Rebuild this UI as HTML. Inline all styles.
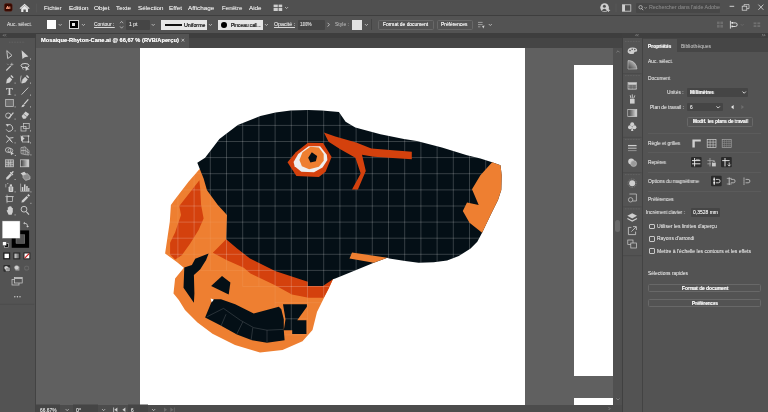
<!DOCTYPE html>
<html lang="fr">
<head>
<meta charset="utf-8">
<title>Mosaique-Rhyton-Cane.ai @ 66,67 % (RVB/Aperçu)</title>
<style>
*{box-sizing:border-box;margin:0;padding:0}
html,body{width:768px;height:412px;overflow:hidden;background:#535353}
body{position:relative;font-family:"Liberation Sans",sans-serif;font-size:5px;color:#d6d6d6;line-height:1}
.a{position:absolute}
.t{position:absolute;white-space:nowrap;line-height:7px;height:7px;transform-origin:0 50%;will-change:transform;text-shadow:0 0 0.5px currentColor}
svg{position:absolute;overflow:visible;will-change:transform}
#menubar{left:0;top:0;width:768px;height:16px;background:#505050}
#ctrlbar{left:0;top:15px;width:768px;height:18px;background:#535353;border-top:1px solid #3e3e3e}
#tabbar{left:34px;top:32.5px;width:589px;height:15px;background:linear-gradient(#3e3e3e 0,#3e3e3e 5px,#454545 5.5px)}
#tab{left:36px;top:33.5px;width:153px;height:14px;background:#535353}
#tools{left:0;top:33px;width:34.5px;height:379px;background:#535353}
#toolshead{left:0;top:32.5px;width:36px;height:5.5px;background:#3f3f3f}
#toolsep{left:34.7px;top:33px;width:1.3px;height:379px;background:#434343}
#canvas{left:36px;top:47.5px;width:577px;height:357px;background:#606060;overflow:hidden}
#ab1{left:104px;top:0;width:385px;height:357px;background:#fff}
#ab2{left:538px;top:17.5px;width:39px;height:311px;background:#fff}
#ab3{left:538px;top:350.5px;width:39px;height:30px;background:#fff}
#vscroll{left:613px;top:47.5px;width:10px;height:357px;background:#505050}
#vthumb{left:614.8px;top:220px;width:5.6px;height:12px;background:#696969;border-radius:2.5px}
#status{left:36px;top:404.5px;width:587px;height:8px;background:#4c4c4c}
#rhead{left:622px;top:32.5px;width:146px;height:6px;background:#3f3f3f}
#icons{left:622.3px;top:38px;width:19.7px;height:374px;background:#535353;border-left:1.2px solid #404040}
#isep{left:641.7px;top:38px;width:1.3px;height:374px;background:#434343}
#panel{left:643px;top:38px;width:125px;height:374px;background:#535353}
#ptabs{left:643px;top:38px;width:125px;height:14px;background:#464646}
#ptab{left:643px;top:38.5px;width:33.5px;height:14px;background:#535353}
.fld{position:absolute;background:#454545;border-radius:1px}
.btn{position:absolute;border:0.6px solid #686868;border-radius:1.5px;background:#535353}
.sw{position:absolute}
.hl{position:absolute;height:0.6px;background:#5b5b5b}
.cb{position:absolute;width:5.6px;height:5.6px;border:0.7px solid #c8c8c8;border-radius:1px}
.dk{position:absolute;background:#2c2c2c;border-radius:1px}
</style>
</head>
<body>
<div id="menubar" class="a"></div>
<div id="ctrlbar" class="a"></div>
<div id="tabbar" class="a"></div>
<div id="tab" class="a"></div>
<div id="tools" class="a"></div>
<div id="toolsep" class="a"></div>
<div id="toolshead" class="a"></div>
<div id="canvas" class="a">
  <div id="ab1" class="a"></div>
  <div id="ab2" class="a"></div>
  <div id="ab3" class="a"></div>
</div>
<div id="vscroll" class="a"></div>
<div id="vthumb" class="a"></div>
<div id="status" class="a"></div>
<div id="rhead" class="a"></div>
<div id="icons" class="a"></div>
<div id="isep" class="a"></div>
<div id="panel" class="a"></div>
<div id="ptabs" class="a"></div>
<div id="ptab" class="a"></div>
<!-- menu bar widgets -->
<div class="fld" style="left:636px;top:3px;width:84px;height:9.5px;background:#474747"></div>
<!-- control bar widgets -->
<div class="sw" style="left:46.8px;top:19.8px;width:9.6px;height:9.3px;background:#fff"></div>
<div class="sw" style="left:68.7px;top:19.6px;width:10.2px;height:9.7px;background:#000;border:0.7px solid #d8d8d8"></div>
<div class="sw" style="left:72.3px;top:23px;width:3px;height:3px;background:#e8e8e8"></div>
<div class="fld" style="left:126px;top:20px;width:24px;height:9.5px"></div>
<div class="sw" style="left:161px;top:19.7px;width:45.5px;height:10px;background:#e6e6e6"></div>
<div class="sw" style="left:165px;top:24px;width:17px;height:1.7px;background:#111"></div>
<div class="sw" style="left:218px;top:19.7px;width:44.5px;height:10px;background:#e6e6e6"></div>
<div class="sw" style="left:221.3px;top:21.8px;width:5.8px;height:5.8px;background:#000;border-radius:50%"></div>
<div class="fld" style="left:298px;top:20px;width:27px;height:9.5px"></div>
<div class="sw" style="left:352.3px;top:19.5px;width:10px;height:10px;background:#e2e2e2"></div>
<div class="btn" style="left:377.6px;top:19.8px;width:56px;height:9.8px"></div>
<div class="btn" style="left:437px;top:19.8px;width:35.6px;height:9.8px"></div>
<div class="a" style="left:371px;top:19px;width:0.7px;height:11px;background:#444"></div>
<!-- panel widgets -->
<div class="fld" style="left:687.3px;top:88px;width:61px;height:8.8px"></div>
<div class="fld" style="left:687.3px;top:102.7px;width:35.5px;height:8.8px"></div>
<div class="btn" style="left:686.5px;top:117.3px;width:66.7px;height:9.3px"></div>
<div class="hl" style="left:648px;top:133px;width:113px"></div>
<div class="hl" style="left:648px;top:152.3px;width:113px"></div>
<div class="hl" style="left:648px;top:171.8px;width:113px"></div>
<div class="hl" style="left:648px;top:190.7px;width:113px"></div>
<div class="fld" style="left:691px;top:207.8px;width:29.3px;height:8.8px"></div>
<div class="cb" style="left:649px;top:223.7px"></div>
<div class="cb" style="left:649px;top:236px"></div>
<div class="cb" style="left:649px;top:248.2px"></div>
<div class="btn" style="left:648.3px;top:283.5px;width:112.5px;height:8.8px"></div>
<div class="btn" style="left:648.3px;top:298.7px;width:112.5px;height:8.8px"></div>
<svg id="dog" width="768" height="412" viewBox="0 0 768 412" style="left:0;top:0">
<defs><clipPath id="sil"><polygon points="199.4,169.3 188.5,181.8 174.3,200.3 170.9,205.0 169.8,221.8 165.1,253.6 176.8,262.0 183.8,267.8 182.7,269.2 175.1,278.5 173.5,293.5 178.8,300.0 185.0,310.0 197.5,322.5 212.5,333.8 235.0,345.0 260.0,352.5 282.5,350.0 302.5,341.2 312.5,330.0 317.0,312.0 323.7,298.5 328.7,288.5 332.9,279.3 300.0,250.0 230.0,200.0 210.0,170.0" fill="#000"/><polygon points="197.3,162.8 205.1,157.8 219.4,138.9 237.8,125.1 260.4,115.9 275.5,112.6 290.6,110.4 308.0,110.0 321.8,110.4 338.9,112.1 345.6,121.8 355.3,127.6 380.4,134.3 403.9,138.9 416.8,140.9 441.9,147.6 467.0,155.2 480.4,158.5 492.1,162.2 500.5,165.2 501.7,175.3 501.3,190.0 498.0,200.1 491.3,213.5 482.1,232.8 477.3,241.8 470.6,248.5 458.8,256.0 447.1,260.5 433.7,262.2 418.6,262.7 405.2,261.0 389.3,258.5 387.2,257.7 373.8,262.7 353.7,271.0 335.3,278.6 332.9,279.3 322.9,286.0 307.8,286.0 307.8,281.8 275.1,270.9 250.0,258.4 237.1,248.6 226.2,239.3 227.0,215.0 217.8,205.0 207.0,190.2 203.6,178.5" fill="#000"/></clipPath><clipPath id="strong"><polygon points="197.3,162.8 205.1,157.8 219.4,138.9 237.8,125.1 260.4,115.9 275.5,112.6 290.6,110.4 308.0,110.0 321.8,110.4 338.9,112.1 345.6,121.8 355.3,127.6 380.4,134.3 403.9,138.9 416.8,140.9 441.9,147.6 467.0,155.2 480.4,158.5 492.1,162.2 500.5,165.2 501.7,175.3 501.3,190.0 498.0,200.1 491.3,213.5 482.1,232.8 477.3,241.8 470.6,248.5 458.8,256.0 447.1,260.5 433.7,262.2 418.6,262.7 405.2,261.0 389.3,258.5 387.2,257.7 373.8,262.7 353.7,271.0 335.3,278.6 332.9,279.3 322.9,286.0 307.8,286.0 307.8,281.8 275.1,270.9 250.0,258.4 237.1,248.6 226.2,239.3 227.0,215.0 217.8,205.0 207.0,190.2 203.6,178.5" fill="#000"/><polygon points="226.2,239.3 230.0,235.0 332.9,275.0 332.9,279.3 328.7,288.5 323.7,297.7 308.6,297.7 291.9,294.4 275.1,285.2 250.5,273.4 243.8,267.8 227.0,260.3 212.8,252.7" fill="#000"/><polygon points="199.4,180.2 179.3,206.1 181.0,215.0 175.1,232.6 170.1,242.7 170.1,254.4 175.1,259.4 181.8,255.3 190.2,243.5 198.6,230.1 203.6,218.4 201.1,205.0 200.3,190.0" fill="#000"/><polygon points="283.0,304.2 306.9,304.2 306.9,306.8 297.2,320.2 306.4,320.2 306.4,333.9 292.2,333.9 292.2,330.2 283.8,330.2 285.5,319.3" fill="#000"/></clipPath></defs>
<polygon points="199.4,169.3 188.5,181.8 174.3,200.3 170.9,205.0 169.8,221.8 165.1,253.6 176.8,262.0 183.8,267.8 182.7,269.2 175.1,278.5 173.5,293.5 178.8,300.0 185.0,310.0 197.5,322.5 212.5,333.8 235.0,345.0 260.0,352.5 282.5,350.0 302.5,341.2 312.5,330.0 317.0,312.0 323.7,298.5 328.7,288.5 332.9,279.3 300.0,250.0 230.0,200.0 210.0,170.0" fill="#ee7f31"/>
<path d="M226.5 109.3H356.1M210.3 125.4H420.9M194.1 141.5H485.7M194.1 157.6H501.9M177.9 173.7H501.9M161.7 189.9H501.9M161.7 206.0H501.9M161.7 222.1H501.9M161.7 238.2H485.7M161.7 254.3H485.7M161.7 270.4H469.5M242.7 286.5H356.1M275.1 302.7H339.9M275.1 318.8H307.5M275.1 334.9H307.5M161.7 189.9V270.4M177.9 173.7V270.4M194.1 141.5V270.4M210.3 125.4V270.4M226.5 109.3V270.4M242.7 109.3V286.5M258.9 109.3V286.5M275.1 109.3V334.9M291.3 109.3V334.9M307.5 109.3V334.9M323.7 109.3V302.7M339.9 109.3V302.7M356.1 109.3V286.5M372.3 125.4V270.4M388.5 125.4V270.4M404.7 125.4V270.4M420.9 125.4V270.4M437.1 141.5V270.4M453.3 141.5V270.4M469.5 141.5V270.4M485.7 141.5V254.3M501.9 157.6V222.1" stroke="#ffffff" stroke-opacity="0.07" stroke-width="1" fill="none" clip-path="url(#sil)"/>
<polygon points="226.2,239.3 230.0,235.0 332.9,275.0 332.9,279.3 328.7,288.5 323.7,297.7 308.6,297.7 291.9,294.4 275.1,285.2 250.5,273.4 243.8,267.8 227.0,260.3 212.8,252.7" fill="#d4410d"/>
<polygon points="199.4,180.2 179.3,206.1 181.0,215.0 175.1,232.6 170.1,242.7 170.1,254.4 175.1,259.4 181.8,255.3 190.2,243.5 198.6,230.1 203.6,218.4 201.1,205.0 200.3,190.0" fill="#d4410d"/>
<polygon points="197.3,162.8 205.1,157.8 219.4,138.9 237.8,125.1 260.4,115.9 275.5,112.6 290.6,110.4 308.0,110.0 321.8,110.4 338.9,112.1 345.6,121.8 355.3,127.6 380.4,134.3 403.9,138.9 416.8,140.9 441.9,147.6 467.0,155.2 480.4,158.5 492.1,162.2 500.5,165.2 501.7,175.3 501.3,190.0 498.0,200.1 491.3,213.5 482.1,232.8 477.3,241.8 470.6,248.5 458.8,256.0 447.1,260.5 433.7,262.2 418.6,262.7 405.2,261.0 389.3,258.5 387.2,257.7 373.8,262.7 353.7,271.0 335.3,278.6 332.9,279.3 322.9,286.0 307.8,286.0 307.8,281.8 275.1,270.9 250.0,258.4 237.1,248.6 226.2,239.3 227.0,215.0 217.8,205.0 207.0,190.2 203.6,178.5" fill="#040f16"/>
<polygon points="208.6,253.6 195.2,258.7 191.9,265.0 184.3,267.6 183.5,287.7 193.9,302.7 194.4,293.5 193.9,275.1 200.3,269.2 206.1,260.0" fill="#040f16"/>
<polygon points="222.0,275.9 230.4,282.6 228.7,294.4 211.1,286.0" fill="#040f16"/>
<polygon points="212.6,299.2 221.0,299.2 235.2,304.2 253.7,313.5 278.8,306.8 281.3,309.3 283.8,319.3 283.8,330.2 284.6,340.3 267.0,342.8 252.0,340.3 236.9,334.4 220.2,325.2 205.1,317.6" fill="#040f16"/>
<polygon points="283.0,304.2 306.9,304.2 306.9,306.8 297.2,320.2 306.4,320.2 306.4,333.9 292.2,333.9 292.2,330.2 283.8,330.2 285.5,319.3" fill="#040f16"/>
<path d="M226.5 109.3H356.1M210.3 125.4H420.9M194.1 141.5H485.7M194.1 157.6H501.9M177.9 173.7H501.9M161.7 189.9H501.9M161.7 206.0H501.9M161.7 222.1H501.9M161.7 238.2H485.7M161.7 254.3H485.7M161.7 270.4H469.5M242.7 286.5H356.1M275.1 302.7H339.9M275.1 318.8H307.5M275.1 334.9H307.5M161.7 189.9V270.4M177.9 173.7V270.4M194.1 141.5V270.4M210.3 125.4V270.4M226.5 109.3V270.4M242.7 109.3V286.5M258.9 109.3V286.5M275.1 109.3V334.9M291.3 109.3V334.9M307.5 109.3V334.9M323.7 109.3V302.7M339.9 109.3V302.7M356.1 109.3V286.5M372.3 125.4V270.4M388.5 125.4V270.4M404.7 125.4V270.4M420.9 125.4V270.4M437.1 141.5V270.4M453.3 141.5V270.4M469.5 141.5V270.4M485.7 141.5V254.3M501.9 157.6V222.1" stroke="#ffffff" stroke-opacity="0.2" stroke-width="1" fill="none" clip-path="url(#strong)"/>
<polygon points="492.1,162.2 500.5,165.2 501.7,175.3 501.3,190.0 498.0,200.1 491.3,213.5 482.1,232.8 469.5,222.7 462.8,211.0 467.0,202.6 478.7,205.1 472.0,189.2 480.4,175.3" fill="#ee7f31"/>
<polygon points="352.0,252.6 387.2,257.7 373.8,262.7 349.5,258.5" fill="#ee7f31"/>
<polygon points="210.6,298.6 213.9,299.6 211.6,302.6" fill="#fff"/>
<polygon points="287.5,162.2 295.8,152.2 308.0,142.7 323.1,143.1 331.6,157.1 325.6,171.7 318.9,177.1 296.4,175.9" fill="#d4410d"/>
<polygon points="293.6,162.0 298.2,154.0 308.6,146.2 320.1,146.2 326.8,154.7 327.4,160.1 322.5,167.4 314.0,172.3 301.3,171.7 294.6,166.2" fill="#efefef"/>
<polygon points="299.4,160.1 302.5,152.2 310.4,146.8 318.9,147.4 323.7,154.0 323.7,160.7 318.9,166.8 309.2,169.2 301.9,166.2" fill="#ee7f31"/>
<polygon points="308.2,157.7 311.8,152.2 317.1,155.9 315.8,161.3 310.4,162.6" fill="#040f16"/>
<polygon points="323.9,132.5 335.3,136.4 356.2,142.6 371.3,148.5 411.8,151.8 411.8,159.3 373.8,156.8 362.0,154.8 365.8,171.0 357.9,189.5 352.0,189.5 360.7,173.6 355.4,157.7 340.3,149.3 328.6,141.8" fill="#d4410d"/>
<g stroke="#8a8f92" stroke-width="0.35" fill="none" opacity="0.8"><path d="M206.8 316.8L223.5 308.4L240.3 320.2L253.7 327.7L267 330.2L283 329.4M226 314.3L221 326M242.8 321.8L236.9 333.9M252.8 327.7L251.1 340.3M267 330.2L267 342.3"/></g>
</svg>
<svg id="toolsvg" width="36" height="412" viewBox="0 0 36 412" style="left:0;top:0" fill="none" stroke="none">
<path d="M3.2 35.3l1-1M3.2 35.3l1 1M5 35.3l1-1M5 35.3l1 1" stroke="#bdbdbd" stroke-width="0.5"/>
<path d="M9 42.2h16" stroke="#6a6a6a" stroke-width="0.8" stroke-dasharray="0.8 0.8"/>
<path d="M6.8 50.6L7.7 58.6L12 55.4Z" stroke="#cfcfcf" stroke-width="0.9" stroke-linejoin="round"/>
<path d="M21.6 50.3L22.4 59L24.7 57.2L28.4 56.6Z" fill="#cfcfcf"/>
<rect x="30" y="58.5" width="1" height="1" fill="#bdbdbd"/>
<path d="M6.3 70.5L10.8 65.8" stroke="#cfcfcf" stroke-width="1.1"/><path d="M11.8 62.8v3.2M10.2 64.4h3.2M7.3 63.8l1 1" stroke="#cfcfcf" stroke-width="0.6"/>
<ellipse cx="25" cy="65.6" rx="4" ry="2.1" stroke="#cfcfcf" stroke-width="1"/><path d="M25.3 66L25.8 71L27.2 69.8L29.6 69.6Z" fill="#cfcfcf"/><path d="M22.6 67.3q-0.6 1.6 0.8 2.4" stroke="#cfcfcf" stroke-width="0.7"/>
<g transform="translate(6.2 75.2)"><path d="M0 8.2L0.6 4.2L3.4 1.6L6 4.2L3.6 7.2Z" fill="#cfcfcf"/><path d="M4.1 0.9L5.2 -0.2L7.4 2L6.5 3.1Z" fill="#cfcfcf"/></g>
<rect x="14.6" y="82.6" width="1" height="1" fill="#bdbdbd"/>
<g transform="translate(21.8 75.2)"><path d="M0 8.2L0.6 4.2L3.4 1.6L6 4.2L3.6 7.2Z" fill="#cfcfcf"/><path d="M4.1 0.9L5.2 -0.2L7.4 2L6.5 3.1Z" fill="#cfcfcf"/></g>
<path d="M21.2 75.6q-1.6 3.4 0.2 7.6" stroke="#cfcfcf" stroke-width="0.7"/>
<rect x="30" y="82.6" width="1" height="1" fill="#bdbdbd"/>
<text x="6" y="95" font-family="Liberation Serif,serif" font-weight="bold" font-size="10.4" fill="#cfcfcf">T</text>
<rect x="14.6" y="94.6" width="1" height="1" fill="#bdbdbd"/>
<path d="M21.6 94.6L28.2 87.6" stroke="#cfcfcf" stroke-width="0.9"/>
<rect x="30" y="94.6" width="1" height="1" fill="#bdbdbd"/>
<rect x="5.7" y="99.6" width="7.6" height="7" fill="#6c6c6c" stroke="#cfcfcf" stroke-width="0.7"/>
<rect x="14.6" y="106.4" width="1" height="1" fill="#bdbdbd"/>
<path d="M24.2 104.2L28.3 99.4" stroke="#cfcfcf" stroke-width="1.2"/><path d="M21.4 107.2q0.4-2.6 2.4-3l1 1q-0.6 2-3.4 2Z" fill="#cfcfcf"/>
<rect x="30" y="106.4" width="1" height="1" fill="#bdbdbd"/>
<circle cx="8.2" cy="115.6" r="2.6" stroke="#cfcfcf" stroke-width="0.8"/><path d="M8.4 118.6L13.4 112.6" stroke="#cfcfcf" stroke-width="1.2"/>
<rect x="14.6" y="118.6" width="1" height="1" fill="#bdbdbd"/>
<path d="M21.6 116L25.6 111.6L29.2 114L25.4 118.8H23Z" fill="#cfcfcf"/><path d="M23.4 114L26.8 116.6" stroke="#535353" stroke-width="0.6"/>
<rect x="30" y="118.6" width="1" height="1" fill="#bdbdbd"/>
<path d="M7.4 125.2A3.4 3.4 0 1 1 6.2 129.4" stroke="#cfcfcf" stroke-width="0.9"/><path d="M5.6 124.2L8.8 124L7.6 126.8Z" fill="#cfcfcf"/>
<rect x="14.6" y="130.4" width="1" height="1" fill="#bdbdbd"/>
<rect x="21" y="126.4" width="5" height="4.6" stroke="#cfcfcf" stroke-width="0.7"/><rect x="23.6" y="123.4" width="5.6" height="5" stroke="#cfcfcf" stroke-width="0.7"/>
<rect x="30" y="130.4" width="1" height="1" fill="#bdbdbd"/>
<path d="M6 135.6L9 138.2L13.4 137.6M6.4 142.6L9.2 139.4L12.6 142.4" stroke="#cfcfcf" stroke-width="1"/><path d="M8 137.4L11.2 140.6" stroke="#cfcfcf" stroke-width="0.9"/>
<rect x="14.6" y="142.4" width="1" height="1" fill="#bdbdbd"/>
<rect x="22.4" y="136" width="6.2" height="6" stroke="#cfcfcf" stroke-width="0.7"/><path d="M20.6 135.2L24.6 138.6L21.2 141.4Z" fill="#cfcfcf"/><rect x="27.8" y="135.3" width="1.5" height="1.5" fill="#cfcfcf"/><rect x="27.8" y="141.2" width="1.5" height="1.5" fill="#cfcfcf"/>
<rect x="30" y="142.4" width="1" height="1" fill="#bdbdbd"/>
<ellipse cx="8.2" cy="150" rx="2.8" ry="2.4" stroke="#cfcfcf" stroke-width="0.8"/><ellipse cx="10.4" cy="150.6" rx="2.4" ry="2.2" stroke="#cfcfcf" stroke-width="0.7"/><path d="M10.6 151L11 155.2L12.2 154.2L14 154Z" fill="#cfcfcf"/>
<rect x="14.8" y="155" width="1" height="1" fill="#bdbdbd"/>
<path d="M21 147.6L25.2 146.8V154.6L21 153.6ZM25.2 146.8L29 150.8V155L25.2 154.6M21 150.6L25.2 150.4L29 153M23.1 147.2V154.2M27.2 149V154.8" stroke="#cfcfcf" stroke-width="0.6"/>
<rect x="30.4" y="154.4" width="1" height="1" fill="#bdbdbd"/>
<rect x="5.6" y="159.8" width="7.8" height="7" fill="#7a7a7a" stroke="#cfcfcf" stroke-width="0.7"/><path d="M5.6 162.1q3.9 1.2 7.8 0M5.6 164.6q3.9-1.2 7.8 0M8.2 159.8q1 3.5 0 7M10.8 159.8q-1 3.5 0 7" stroke="#cfcfcf" stroke-width="0.6"/>
<defs><linearGradient id="gr1" x1="0" x2="1" y1="0" y2="0"><stop offset="0" stop-color="#3a3a3a"/><stop offset="1" stop-color="#e0e0e0"/></linearGradient></defs>
<rect x="20.4" y="159.8" width="8.4" height="7" fill="url(#gr1)" stroke="#cfcfcf" stroke-width="0.7"/>
<path d="M6 179.6L6.4 177.6L10.2 173.6L11.8 175.2L8 179.2Z" fill="#cfcfcf"/><path d="M10.6 172.6L12.6 174.6M11.2 173.8L13 171.8" stroke="#cfcfcf" stroke-width="1.3" stroke-linecap="round"/>
<rect x="14.6" y="179" width="1" height="1" fill="#bdbdbd"/>
<path d="M20.6 173.2L24.4 171.8L26.8 174.4L23 175.8Z" fill="#cfcfcf"/><path d="M23 175.2L27.4 173.6L30 176.6V179L25.6 180.4L23 177.6Z" fill="#8c8c8c" stroke="#cfcfcf" stroke-width="0.6"/>
<rect x="8.6" y="186.4" width="4.6" height="5.6" rx="0.8" fill="#cfcfcf"/><rect x="9.8" y="184.4" width="2.2" height="2" fill="#cfcfcf"/><path d="M5.8 184v3.4M7 183.6h1.4" stroke="#cfcfcf" stroke-width="0.6"/><path d="M10 188h1.8M10 190h1.8" stroke="#535353" stroke-width="0.7"/>
<rect x="14.6" y="191.4" width="1" height="1" fill="#bdbdbd"/>
<path d="M20.6 183.6V191.4H29.6" stroke="#cfcfcf" stroke-width="0.6"/><rect x="21.8" y="187" width="1.5" height="4" fill="#cfcfcf"/><rect x="24" y="184.4" width="1.5" height="6.6" fill="#cfcfcf"/><rect x="26.2" y="186" width="1.5" height="5" fill="#cfcfcf"/><rect x="28.2" y="188" width="1.2" height="3" fill="#cfcfcf"/>
<rect x="30.4" y="191.4" width="1" height="1" fill="#bdbdbd"/>
<rect x="7" y="196.6" width="5.4" height="5" stroke="#cfcfcf" stroke-width="0.7"/><path d="M7 194.6v8.6M5.2 196.6h8.8" stroke="#cfcfcf" stroke-width="0.6"/>
<path d="M21.4 202.6L22 200.6L26.6 196L28.2 197.6L23.6 202.2Z" fill="#cfcfcf"/><path d="M27.2 195.2L28.4 194L30 195.6L28.8 196.8Z" fill="#cfcfcf"/>
<rect x="30.4" y="202.8" width="1" height="1" fill="#bdbdbd"/>
<path d="M6.6 210.6L7.8 210V207.2H8.8V206.4H9.8V206.2H10.8V206.8H11.8V208H12.8V212L11.6 214.8H8.6Z" fill="#cfcfcf"/>
<rect x="14.6" y="214.4" width="1" height="1" fill="#bdbdbd"/>
<circle cx="24" cy="209.2" r="2.9" stroke="#cfcfcf" stroke-width="0.9"/><path d="M26.2 211.6L29 214.6" stroke="#cfcfcf" stroke-width="1.1"/>
<rect x="11.7" y="230.4" width="17.4" height="17.4" fill="#000"/><rect x="16" y="234.8" width="8.8" height="8.6" fill="#535353" stroke="#9a9a9a" stroke-width="0.4"/>
<rect x="2.2" y="221" width="17.8" height="17.2" fill="#fff" stroke="#8a8a8a" stroke-width="0.4"/>
<path d="M24.6 223.2q3 0 3 3" stroke="#cfcfcf" stroke-width="0.8"/><path d="M24.8 221.8L23.2 223.2L24.8 224.6ZM26.2 226L27.6 227.6L29 226Z" fill="#cfcfcf"/>
<rect x="4.6" y="243.6" width="3.6" height="3.6" fill="#000" stroke="#ddd" stroke-width="0.5"/><rect x="2.6" y="241.8" width="3.8" height="3.8" fill="#fff" stroke="#333" stroke-width="0.4"/>
<rect x="3.2" y="252.4" width="7" height="7" fill="#1e1e1e"/><rect x="4.5" y="253.7" width="4.4" height="4.4" fill="#fff"/>
<defs><linearGradient id="gr2" x1="0" x2="1" y1="0" y2="0"><stop offset="0" stop-color="#d8d8d8"/><stop offset="1" stop-color="#5a5a5a"/></linearGradient></defs>
<rect x="13.3" y="252.4" width="7" height="7" fill="#2a2a2a"/><rect x="14.5" y="253.6" width="4.6" height="4.6" fill="url(#gr2)"/>
<rect x="23.4" y="252.4" width="7" height="7" fill="#2a2a2a"/><rect x="24.5" y="253.5" width="4.8" height="4.8" fill="#fff"/><path d="M24.7 258.1L29.1 253.7" stroke="#d01818" stroke-width="1.2"/>
<rect x="3.4" y="265" width="6.8" height="6.8" rx="1" fill="#2e2e2e"/><circle cx="6.2" cy="267.8" r="1.9" fill="#cfcfcf"/><rect x="6" y="267.8" width="3.4" height="3.2" fill="#9a9a9a" stroke="#e0e0e0" stroke-width="0.4"/>
<rect x="15.4" y="266.6" width="4" height="4" fill="#9a9a9a"/><circle cx="16.6" cy="267.6" r="2.2" fill="#cfcfcf" stroke="#8a8a8a" stroke-width="0.4"/>
<circle cx="26.6" cy="268.2" r="2.2" stroke="#6e6e6e" stroke-width="0.6"/><rect x="25" y="266.4" width="3.4" height="3.4" stroke="#6a6a6a" stroke-width="0.4"/>
<rect x="12" y="279.6" width="7" height="5.4" stroke="#cfcfcf" stroke-width="0.7"/><rect x="14.6" y="277.4" width="7.6" height="5.6" fill="#535353" stroke="#cfcfcf" stroke-width="0.7"/><path d="M14.6 278.3h7.6" stroke="#cfcfcf" stroke-width="1"/>
<circle cx="14.8" cy="296.8" r="0.7" fill="#cfcfcf"/><circle cx="17.4" cy="296.8" r="0.7" fill="#cfcfcf"/><circle cx="20" cy="296.8" r="0.7" fill="#cfcfcf"/>
<path d="M0 304.3h34.3" stroke="#484848" stroke-width="0.6"/>
</svg>
<svg id="iconsvg" width="768" height="412" viewBox="0 0 768 412" style="left:0;top:0" fill="none" stroke="none">
<rect x="4.4" y="3.6" width="7.8" height="7.6" rx="1.5" fill="#360900" stroke="#5c2418" stroke-width="0.5"/>
<path d="M19.6 8.2L24.6 3.8L29.6 8.2L28.9 8.9L24.6 5.2L20.3 8.9Z" fill="#e6e6e6"/><path d="M21.2 8.4L24.6 5.6L28 8.4V12H25.8V9.4H23.4V12H21.2Z" fill="#e6e6e6"/>
<path d="M36.6 3.6V12.4" stroke="#5c5c5c" stroke-width="0.6"/>
<rect x="273.6" y="4.6" width="4.2" height="2.6" fill="#cfcfcf"/><rect x="278.6" y="4.6" width="3.6" height="2.6" fill="#cfcfcf"/><rect x="273.6" y="8" width="4.2" height="3" fill="#cfcfcf"/><rect x="278.6" y="8" width="3.6" height="3" fill="#cfcfcf"/>
<path d="M285.1 7.05L286.6 8.55L288.1 7.05" stroke="#cfcfcf" stroke-width="0.8"/>
<circle cx="604.6" cy="7.6" r="4.3" fill="#cfcfcf"/><circle cx="604.4" cy="6.2" r="1.5" fill="#505050"/><path d="M601.8 10.4q2.6-3.2 5.2 0q-2.6 1.8-5.2 0Z" fill="#505050"/><path d="M608.4 8.6v3.4M606.7 10.3h3.4" stroke="#cfcfcf" stroke-width="0.9"/>
<path d="M616 3.6V12.4" stroke="#5c5c5c" stroke-width="0.6"/>
<rect x="622.4" y="4.8" width="8.4" height="6.4" stroke="#cfcfcf" stroke-width="0.8"/><rect x="622.4" y="4.8" width="2.6" height="6.4" fill="#cfcfcf"/>
<circle cx="640.6" cy="7.2" r="1.7" stroke="#cfcfcf" stroke-width="0.7"/><path d="M641.8 8.6L643.2 10.2" stroke="#cfcfcf" stroke-width="0.8"/>
<path d="M644.5 7.25L645.6 8.35L646.7 7.25" stroke="#cfcfcf" stroke-width="0.6"/>
<path d="M729.6 6.3h4.6" stroke="#e0e0e0" stroke-width="0.9"/>
<rect x="742.2" y="6.2" width="4.6" height="4" stroke="#e0e0e0" stroke-width="0.7"/><path d="M744 6.2V4.6H749V8.6H746.8" stroke="#e0e0e0" stroke-width="0.7"/>
<path d="M758.4 4.6L763.4 9.8M763.4 4.6L758.4 9.8" stroke="#e0e0e0" stroke-width="0.8"/>
<path d="M58.7 24.05L60.2 25.55L61.7 24.05" stroke="#cfcfcf" stroke-width="0.8"/>
<path d="M81.9 24.05L83.4 25.55L84.9 24.05" stroke="#cfcfcf" stroke-width="0.8"/>
<path d="M151.7 24.05L153.2 25.55L154.7 24.05" stroke="#cfcfcf" stroke-width="0.8"/>
<path d="M208.9 24.05L210.4 25.55L211.9 24.05" stroke="#cfcfcf" stroke-width="0.8"/>
<path d="M264.9 24.05L266.4 25.55L267.9 24.05" stroke="#cfcfcf" stroke-width="0.8"/>
<path d="M364.9 24.05L366.4 25.55L367.9 24.05" stroke="#cfcfcf" stroke-width="0.8"/>
<path d="M327.6 22.8L329.4 24.7L327.6 26.6" stroke="#cfcfcf" stroke-width="0.8"/>
<path d="M120 23.2L121.6 21.4L123.2 23.2M120 26.4L121.6 28.2L123.2 26.4" stroke="#cfcfcf" stroke-width="0.7"/>
<path d="M478 22.4h4.6M478 24.6h4.6M478 26.8h2.4" stroke="#cfcfcf" stroke-width="0.6"/><path d="M482 26L483.4 28.4L484.6 25.4Z" fill="#cfcfcf"/>
<path d="M488.8 24.05L490.3 25.55L491.8 24.05" stroke="#cfcfcf" stroke-width="0.8"/>
<rect x="717" y="21.6" width="2.6" height="2.6" fill="#6e6e6e"/><rect x="720.4" y="21.6" width="2.6" height="2.6" fill="#6e6e6e"/><rect x="717" y="25" width="2.6" height="2.6" fill="#6e6e6e"/><rect x="720.4" y="25" width="2.6" height="2.6" fill="#6e6e6e"/>
<path d="M730.4 20.8V28.6" stroke="#e8e8e8" stroke-width="0.9"/><path d="M732 22.9h3.4a1.3 1.3 0 0 1 0 3.6h-3.4" stroke="#e8e8e8" stroke-width="0.9"/><rect x="731.4" y="22" width="1.6" height="1.6" fill="#e8e8e8"/><rect x="731.4" y="25.6" width="1.6" height="1.6" fill="#e8e8e8"/>
<path d="M740.7 24.05L742.2 25.55L743.7 24.05" stroke="#6e6e6e" stroke-width="0.8"/>
<rect x="753.6" y="22.4" width="2.8" height="1.8" fill="#707070"/><rect x="757.4" y="22.4" width="2.8" height="1.8" fill="#707070"/><rect x="753.6" y="25.2" width="2.8" height="1.8" fill="#707070"/><rect x="757.4" y="25.2" width="2.8" height="1.8" fill="#707070"/>
<path d="M181.6 38.8L184.2 41.6M184.2 38.8L181.6 41.6" stroke="#e0e0e0" stroke-width="0.7"/>
<path d="M635.6 35.2l1-1M635.6 35.2l1 1M637.4 35.2l1-1M637.4 35.2l1 1" stroke="#bdbdbd" stroke-width="0.5"/>
<path d="M762.2 34.2l1 1l-1 1M764 34.2l1 1l-1 1" stroke="#bdbdbd" stroke-width="0.5"/>
<path d="M616.4 52.4L618 50.8L619.6 52.4" stroke="#9a9a9a" stroke-width="0.6"/>
<path d="M616.4 398.4L618 400L619.6 398.4" stroke="#9a9a9a" stroke-width="0.6"/>
<path d="M608.6 407.2L610 408.6L608.6 410" stroke="#9a9a9a" stroke-width="0.6"/>
<rect x="36" y="404.5" width="24" height="7.5" fill="#454545"/><rect x="73" y="404.5" width="25" height="7.5" fill="#454545"/><rect x="128" y="404.5" width="20" height="7.5" fill="#454545"/>
<path d="M65.7 409.15L67.2 410.65L68.7 409.15" stroke="#cfcfcf" stroke-width="0.8"/>
<path d="M102.1 409.15L103.6 410.65L105.1 409.15" stroke="#cfcfcf" stroke-width="0.8"/>
<path d="M152.1 409.15L153.6 410.65L155.1 409.15" stroke="#cfcfcf" stroke-width="0.8"/>
<path d="M113.6 407.5V412.1" stroke="#cfcfcf" stroke-width="0.8"/><path d="M117.4 407.5L114.4 409.8L117.4 412.1Z" fill="#cfcfcf"/><path d="M125.4 407.5L122.4 409.8L125.4 412.1Z" fill="#cfcfcf"/>
<path d="M164 407.5L167 409.8L164 412.1Z" fill="#6c6c6c"/><path d="M170.4 407.5L173.4 409.8L170.4 412.1Z" fill="#6c6c6c"/><path d="M174.4 407.5V412.1" stroke="#6c6c6c" stroke-width="0.8"/>
<path d="M625 41.4h15" stroke="#6a6a6a" stroke-width="0.8" stroke-dasharray="0.8 0.8"/>
<path d="M625 75.6h15" stroke="#6a6a6a" stroke-width="0.8" stroke-dasharray="0.8 0.8"/><path d="M623 73.6h18.6" stroke="#474747" stroke-width="0.7"/>
<path d="M625 139.4h15" stroke="#6a6a6a" stroke-width="0.8" stroke-dasharray="0.8 0.8"/><path d="M623 137.4h18.6" stroke="#474747" stroke-width="0.7"/>
<path d="M625 174.6h15" stroke="#6a6a6a" stroke-width="0.8" stroke-dasharray="0.8 0.8"/><path d="M623 172.6h18.6" stroke="#474747" stroke-width="0.7"/>
<path d="M625 208.8h15" stroke="#6a6a6a" stroke-width="0.8" stroke-dasharray="0.8 0.8"/><path d="M623 206.8h18.6" stroke="#474747" stroke-width="0.7"/>
<path d="M623 255.6h18.6" stroke="#474747" stroke-width="0.7"/>
<path d="M627.6 51.2q0-3.6 5-3.8q4.6 0 4.6 3q0 1.6-2 1.4q-1.2 0-1 1q0.2 1.2-2.2 1.2q-4.4 0-4.4-2.8Z" fill="#cfcfcf"/><circle cx="630" cy="50.6" r="0.8" fill="#535353"/><circle cx="632.2" cy="49.2" r="0.8" fill="#535353"/><circle cx="634.8" cy="49.6" r="0.8" fill="#535353"/>
<defs><linearGradient id="gr3" x1="0" x2="1" y1="1" y2="0"><stop offset="0" stop-color="#3c3c3c"/><stop offset="1" stop-color="#e0e0e0"/></linearGradient></defs>
<path d="M628 69V60.6H629.6Q636 61.4 637 69Z" fill="url(#gr3)" stroke="#cfcfcf" stroke-width="0.6"/>
<rect x="628" y="82.6" width="8.6" height="6.6" fill="#8a8a8a" stroke="#cfcfcf" stroke-width="0.6"/><path d="M628 85h8.6M628 87.2h8.6M631 85v4.2M634 85v4.2" stroke="#535353" stroke-width="0.5"/><rect x="628.3" y="82.9" width="8" height="1.8" fill="#cfcfcf"/>
<rect x="630" y="99" width="4.6" height="4.6" fill="#cfcfcf"/><path d="M631 98.6L630.2 95.2M632.3 98.6V94.4M633.6 98.6L634.8 95.4" stroke="#cfcfcf" stroke-width="0.9"/>
<rect x="627.8" y="109.6" width="9" height="7" fill="url(#gr1)" stroke="#cfcfcf" stroke-width="0.7"/>
<circle cx="632.2" cy="124.2" r="2" fill="#cfcfcf"/><circle cx="630" cy="127.2" r="2" fill="#cfcfcf"/><circle cx="634.4" cy="127.2" r="2" fill="#cfcfcf"/><path d="M632.2 126L631 131H633.4Z" fill="#cfcfcf"/>
<path d="M628 145.6h8.6" stroke="#cfcfcf" stroke-width="1.3"/><path d="M628 148.2h8.6" stroke="#cfcfcf" stroke-width="0.9"/><path d="M628 150.6h8.6" stroke="#cfcfcf" stroke-width="0.5"/>
<circle cx="631.2" cy="161.6" r="3" fill="#cfcfcf"/><circle cx="633.6" cy="163.6" r="3" fill="#9a9a9a" stroke="#cfcfcf" stroke-width="0.5"/>
<circle cx="632.2" cy="183.2" r="3" fill="#cfcfcf"/><circle cx="632.2" cy="183.2" r="4.2" stroke="#8a8a8a" stroke-width="0.8" stroke-dasharray="1 0.8"/>
<path d="M629.4 194H636.4V201H632.6" stroke="#cfcfcf" stroke-width="0.7"/><circle cx="630.6" cy="199.8" r="2.2" stroke="#cfcfcf" stroke-width="0.7"/>
<path d="M632.2 213.2L637 215.8L632.2 218.4L627.4 215.8Z" fill="#cfcfcf"/><path d="M627.4 218.4L632.2 221L637 218.4" stroke="#cfcfcf" stroke-width="1.1"/>
<path d="M631.4 227.4H628.4V234.6H635.6V231.6" stroke="#cfcfcf" stroke-width="0.8"/><path d="M631.4 231.6L636 227M633 226.6H636.4V230" stroke="#cfcfcf" stroke-width="0.8"/>
<rect x="627.8" y="240" width="5.2" height="4.6" stroke="#cfcfcf" stroke-width="0.7"/><rect x="630.8" y="243" width="5.8" height="5" fill="#535353" stroke="#cfcfcf" stroke-width="0.7"/>
<path d="M742.5 91.55000000000001L744.2 93.25L745.9000000000001 91.55000000000001" stroke="#e8e8e8" stroke-width="0.9"/>
<path d="M716.5 106.35000000000001L718.2 108.05L719.9000000000001 106.35000000000001" stroke="#e8e8e8" stroke-width="0.9"/>
<path d="M733.6 105L731 107.1L733.6 109.2Z" fill="#e8e8e8"/><path d="M741.4 105L744 107.1L741.4 109.2Z" fill="#6e6e6e"/>
<path d="M692.4 147.6V139.4H700.8V141.6H694.8V147.6Z" fill="#cfcfcf"/>
<rect x="707.2" y="139.4" width="8.8" height="8.2" stroke="#cfcfcf" stroke-width="0.7"/><path d="M710.1 139.4v8.2M713.1 139.4v8.2M707.2 142.1h8.8M707.2 144.9h8.8" stroke="#cfcfcf" stroke-width="0.6"/>
<rect x="722.2" y="139.4" width="9" height="8.2" stroke="#a8a8a8" stroke-width="0.7"/><path d="M724.4 139.4v8.2M726.7 139.4v8.2M729 139.4v8.2M722.2 141.4h9M722.2 143.5h9M722.2 145.6h9" stroke="#909090" stroke-width="0.5"/>
<rect x="691" y="157" width="10.6" height="10.3" rx="1" fill="#2b2b2b"/>
<path d="M694.6 158V166.4" stroke="#f0f0f0" stroke-width="0.9"/><path d="M692 160.6H700.4M692 163.8H700.4" stroke="#f0f0f0" stroke-width="0.9"/><path d="M696 159.4h3.6" stroke="#f0f0f0" stroke-width="0.5"/>
<path d="M710 158V166.4M707.4 160.6H714.6M707.4 163.8H711" stroke="#a8a8a8" stroke-width="0.8"/><rect x="712" y="163" width="3.8" height="3.4" fill="#c8c8c8"/><path d="M712.8 163v-1.2q1.1-1.1 2.2 0V163" stroke="#c8c8c8" stroke-width="0.6"/>
<rect x="721" y="157" width="10.8" height="10.3" rx="1" fill="#2b2b2b"/>
<path d="M725 158V166.4M722.2 160.6H729.6" stroke="#f0f0f0" stroke-width="0.9"/><path d="M729.2 162.4V166M727.8 164.6L729.2 166.2L730.6 164.6" stroke="#f0f0f0" stroke-width="0.7"/>
<rect x="711" y="175.8" width="10.7" height="10.5" rx="1" fill="#2b2b2b"/>
<path d="M714.2 177.4V185" stroke="#f0f0f0" stroke-width="0.9"/><path d="M715.8000000000001 179.4h2.6a1.6 1.6 0 0 1 0 3.4h-2.6" stroke="#f0f0f0" stroke-width="0.8"/>
<rect x="713.4000000000001" y="178.6" width="1.6" height="1.6" fill="#f0f0f0"/><rect x="713.4000000000001" y="182" width="1.6" height="1.6" fill="#f0f0f0"/>
<path d="M729.2 177.4V185" stroke="#c8c8c8" stroke-width="0.9"/><path d="M730.8000000000001 179.4h2.6a1.6 1.6 0 0 1 0 3.4h-2.6" stroke="#c8c8c8" stroke-width="0.8"/>
<path d="M726.8000000000001 178.4h5M726.8000000000001 184h5" stroke="#c8c8c8" stroke-width="0.6"/>
<path d="M744 177.4V185" stroke="#c8c8c8" stroke-width="0.9"/><path d="M745.6 179.4h2.6a1.6 1.6 0 0 1 0 3.4h-2.6" stroke="#c8c8c8" stroke-width="0.8"/>
<path d="M744 177.4V185" stroke="#535353" stroke-width="0.9" stroke-dasharray="1 1"/>
</svg>
<span class="t" id="t0" style="left:43.5px;top:4.10px;font-size:6.2px;color:#dcdcdc;transform:scaleX(0.942);">Fichier</span>
<span class="t" id="t1" style="left:68.5px;top:4.10px;font-size:6.2px;color:#dcdcdc;transform:scaleX(1.031);">Edition</span>
<span class="t" id="t2" style="left:94px;top:4.10px;font-size:6.2px;color:#dcdcdc;transform:scaleX(1.048);">Objet</span>
<span class="t" id="t3" style="left:116px;top:4.10px;font-size:6.2px;color:#dcdcdc;transform:scaleX(1.014);">Texte</span>
<span class="t" id="t4" style="left:137.5px;top:4.10px;font-size:6.2px;color:#dcdcdc;">Sélection</span>
<span class="t" id="t5" style="left:168.5px;top:4.10px;font-size:6.2px;color:#dcdcdc;transform:scaleX(1.030);">Effet</span>
<span class="t" id="t6" style="left:188.3px;top:4.10px;font-size:6.2px;color:#dcdcdc;transform:scaleX(1.020);">Affichage</span>
<span class="t" id="t7" style="left:221.5px;top:4.10px;font-size:6.2px;color:#dcdcdc;transform:scaleX(0.947);">Fenêtre</span>
<span class="t" id="t8" style="left:248.5px;top:4.10px;font-size:6.2px;color:#dcdcdc;transform:scaleX(1.009);">Aide</span>
<span class="t" id="t9" style="left:648.5px;top:4.10px;font-size:5px;color:#7c7c7c;transform:scaleX(1.067);">Rechercher dans l'aide Adobe</span>
<span class="t" id="t10" style="left:6.2px;top:4.00px;font-size:4.4px;color:#f0987a;font-weight:bold;">Ai</span>
<span class="t" id="t11" style="left:7px;top:21.30px;font-size:4.9px;color:#c8c8c8;transform:scaleX(0.989);">Auc. sélect.</span>
<span class="t" id="t12" style="left:94px;top:21.30px;font-size:4.9px;color:#d8d8d8;transform:scaleX(1.019);text-decoration:underline;">Contour :</span>
<span class="t" id="t13" style="left:129px;top:21.30px;font-size:4.9px;color:#d8d8d8;transform:scaleX(1.040);">1 pt</span>
<span class="t" id="t14" style="left:183.5px;top:21.50px;font-size:4.9px;color:#1a1a1a;transform:scaleX(1.083);">Uniforme</span>
<span class="t" id="t15" style="left:230.5px;top:21.50px;font-size:4.9px;color:#1a1a1a;transform:scaleX(0.985);">Pinceau call...</span>
<span class="t" id="t16" style="left:274px;top:21.30px;font-size:4.9px;color:#d8d8d8;transform:scaleX(1.073);text-decoration:underline;">Opacité :</span>
<span class="t" id="t17" style="left:300px;top:21.30px;font-size:4.9px;color:#d8d8d8;transform:scaleX(0.919);">100%</span>
<span class="t" id="t18" style="left:335px;top:21.30px;font-size:4.9px;color:#a0a0a0;transform:scaleX(1.030);">Style :</span>
<span class="t" id="t19" style="left:383.4px;top:21.30px;font-size:4.9px;color:#f2f2f2;">Format de document</span>
<span class="t" id="t20" style="left:441.4px;top:21.30px;font-size:4.9px;color:#f2f2f2;transform:scaleX(0.993);">Préférences</span>
<span class="t" id="t21" style="left:41px;top:37.10px;font-size:5.7px;color:#f2f2f2;font-weight:bold;">Mosaique-Rhyton-Cane.ai @ 66,67 % (RVB/Aperçu)</span>
<span class="t" id="t22" style="left:39.5px;top:406.50px;font-size:4.9px;color:#d8d8d8;transform:scaleX(0.994);">66,67%</span>
<span class="t" id="t23" style="left:76px;top:406.50px;font-size:4.9px;color:#d8d8d8;transform:scaleX(1.067);">0°</span>
<span class="t" id="t24" style="left:131px;top:406.50px;font-size:4.9px;color:#d8d8d8;transform:scaleX(0.914);">6</span>
<span class="t" id="t25" style="left:648px;top:42.70px;font-size:4.9px;color:#f2f2f2;font-weight:bold;transform:scaleX(0.963);">Propriétés</span>
<span class="t" id="t26" style="left:681px;top:42.70px;font-size:4.9px;color:#a8a8a8;transform:scaleX(1.021);">Bibliothèques</span>
<span class="t" id="t27" style="left:648px;top:57.50px;font-size:4.9px;color:#d0d0d0;transform:scaleX(0.989);">Auc. sélect.</span>
<span class="t" id="t28" style="left:648px;top:75.00px;font-size:4.9px;color:#d0d0d0;transform:scaleX(0.987);">Document</span>
<span class="t" id="t29" style="left:666.7px;top:88.90px;font-size:4.9px;color:#d0d0d0;transform:scaleX(0.994);">Unités :</span>
<span class="t" id="t30" style="left:690px;top:88.90px;font-size:4.9px;color:#f2f2f2;font-weight:bold;transform:scaleX(0.939);">Millimètres</span>
<span class="t" id="t31" style="left:649.7px;top:103.50px;font-size:4.9px;color:#d0d0d0;transform:scaleX(1.008);">Plan de travail :</span>
<span class="t" id="t32" style="left:689.5px;top:103.50px;font-size:4.9px;color:#e0e0e0;transform:scaleX(0.951);">6</span>
<span class="t" id="t33" style="left:692.5px;top:118.40px;font-size:4.9px;color:#f2f2f2;font-weight:bold;transform:scaleX(0.924);">Modif. les plans de travail</span>
<span class="t" id="t34" style="left:648px;top:139.90px;font-size:4.9px;color:#d0d0d0;transform:scaleX(0.989);">Règle et grilles</span>
<span class="t" id="t35" style="left:648px;top:158.50px;font-size:4.9px;color:#d0d0d0;transform:scaleX(0.973);">Repères</span>
<span class="t" id="t36" style="left:648px;top:178.20px;font-size:4.9px;color:#d0d0d0;transform:scaleX(0.987);">Options du magnétisme</span>
<span class="t" id="t37" style="left:648px;top:196.20px;font-size:4.9px;color:#d0d0d0;transform:scaleX(0.967);">Préférences</span>
<span class="t" id="t38" style="left:646.2px;top:208.70px;font-size:4.9px;color:#d0d0d0;transform:scaleX(0.976);">Incrément clavier :</span>
<span class="t" id="t39" style="left:693.3px;top:208.70px;font-size:4.9px;color:#e0e0e0;transform:scaleX(1.022);">0,3528 mm</span>
<span class="t" id="t40" style="left:656.7px;top:223.00px;font-size:4.9px;color:#d0d0d0;transform:scaleX(1.039);">Utiliser les limites d'aperçu</span>
<span class="t" id="t41" style="left:656.7px;top:235.30px;font-size:4.9px;color:#d0d0d0;transform:scaleX(1.018);">Rayons d'arrondi</span>
<span class="t" id="t42" style="left:656.7px;top:247.50px;font-size:4.9px;color:#d0d0d0;transform:scaleX(1.035);">Mettre à l'échelle les contours et les effets</span>
<span class="t" id="t43" style="left:648px;top:269.90px;font-size:4.9px;color:#d0d0d0;">Sélections rapides</span>
<span class="t" id="t44" style="left:681.5px;top:284.50px;font-size:4.9px;color:#f2f2f2;font-weight:bold;transform:scaleX(0.961);">Format de document</span>
<span class="t" id="t45" style="left:691.8px;top:299.60px;font-size:4.9px;color:#f2f2f2;font-weight:bold;transform:scaleX(0.928);">Préférences</span>
</body>
</html>
